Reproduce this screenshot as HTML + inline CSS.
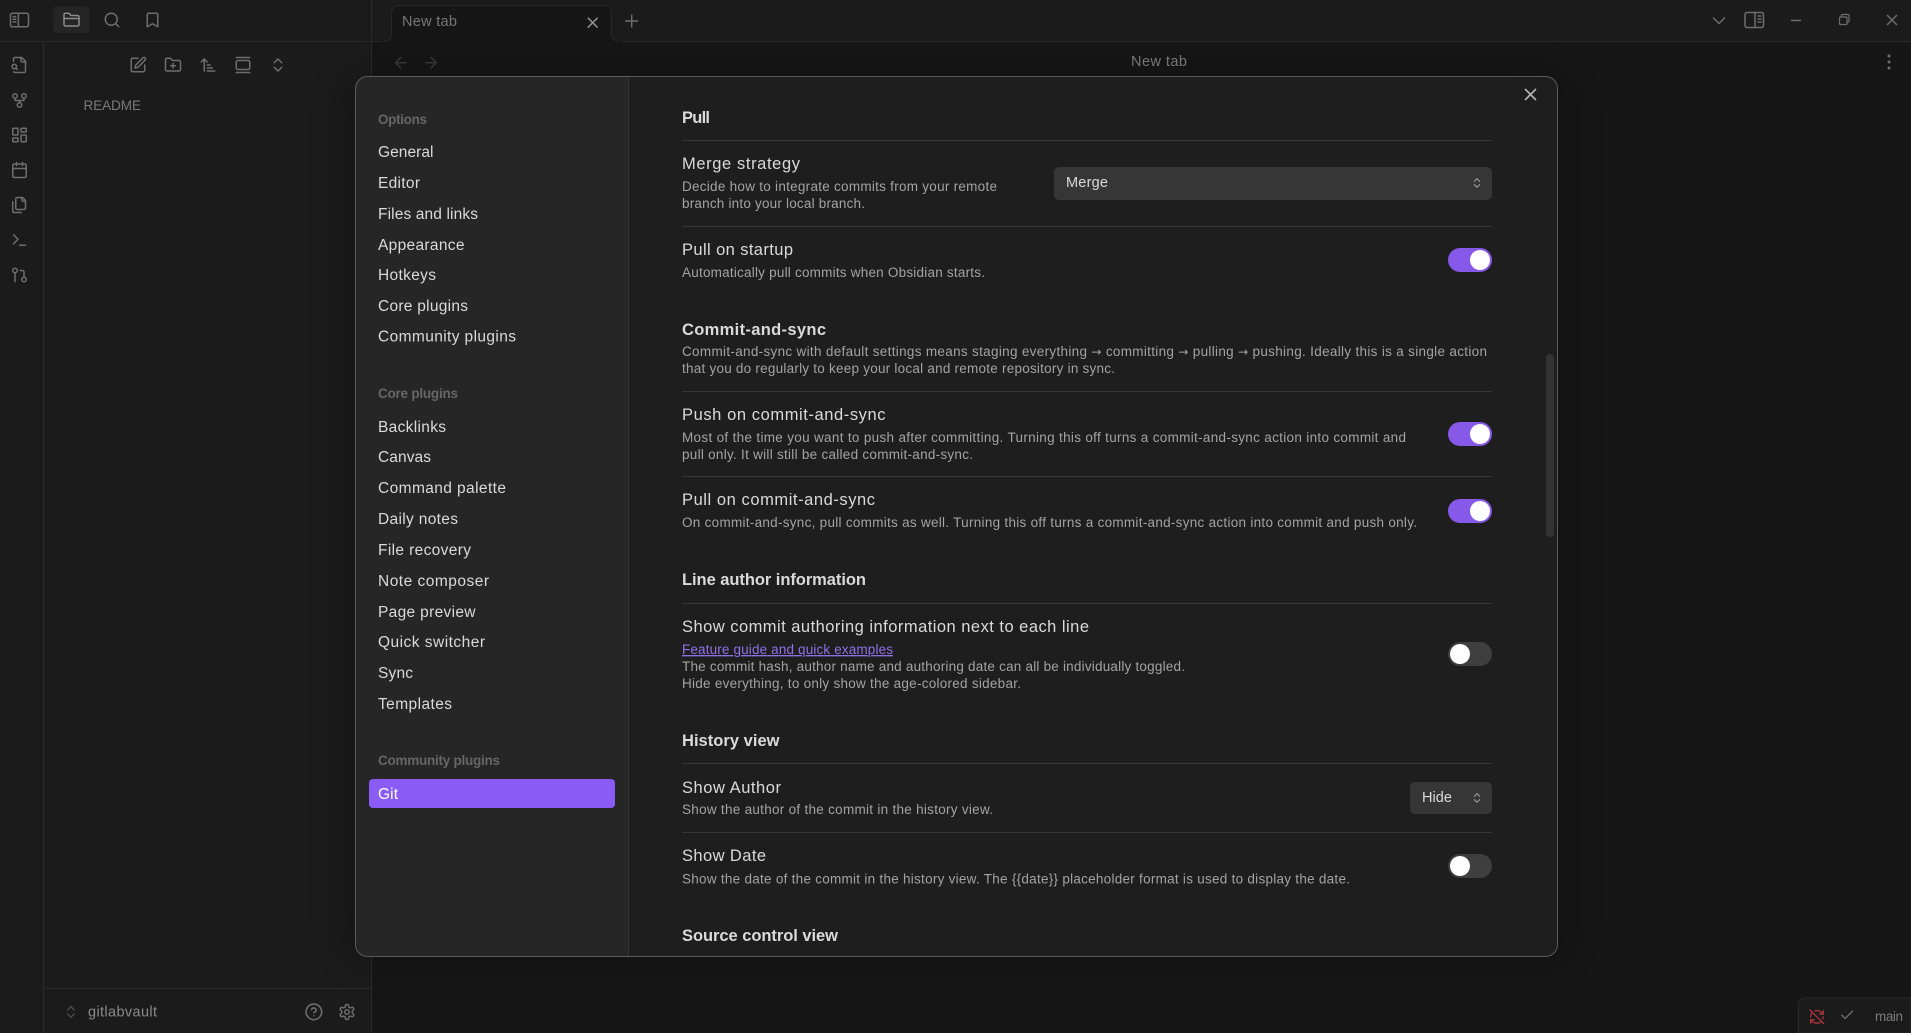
<!DOCTYPE html>
<html><head><meta charset="utf-8"><title>New tab</title>
<style>
html,body{margin:0;padding:0;background:#161616;width:1911px;height:1033px;overflow:hidden}
svg{display:block}
text{font-family:"Liberation Sans",sans-serif;white-space:pre}
.n{font-size:16.5px;fill:#dadada}
.d{font-size:13.5px;fill:#a3a3a3}
.h{font-size:16.5px;font-weight:700;fill:#dadada}
.s{font-size:15.5px;fill:#dadada}
.l{font-size:13.5px;font-weight:700;fill:#666}
.i{fill:none;stroke:#6e6e6e;stroke-width:2;stroke-linecap:round;stroke-linejoin:round}
.ar{font-family:"DejaVu Sans",sans-serif;font-size:12px}
</style></head><body>
<svg width="1911" height="1033" viewBox="0 0 1911 1033" xmlns="http://www.w3.org/2000/svg">
<defs><filter id="sh" x="-10%" y="-10%" width="120%" height="120%"><feGaussianBlur stdDeviation="18"/></filter></defs>
<!-- base -->
<rect width="1911" height="1033" fill="#161616"/>
<rect width="1911" height="41" fill="#1b1b1b"/>
<rect x="0" y="0" width="372" height="1033" fill="#1b1b1b"/>
<path d="M0 41.5H381M622 41.5H1911" stroke="#2a2a2a"/>
<path d="M43.5 41V1033M371.500 0V1033M44 988.500H371" stroke="#2a2a2a"/>
<!-- tab -->
<path d="M383 41.500Q391.500 41.500 391.500 33V13Q391.500 5.500 399.500 5.500H603.500Q611.500 5.500 611.500 13V33Q611.500 41.500 620 41.500V50H383Z" fill="#161616"/>
<path d="M383 41.500Q391.500 41.500 391.500 33V13Q391.500 5.500 399.500 5.500H603.500Q611.500 5.500 611.500 13V33Q611.500 41.500 620 41.500" fill="none" stroke="#282828"/>
<text x="402" y="26" font-size="14.500" fill="#777" textLength="55">New tab</text>
<g class="i" style="stroke:#8f8f8f;stroke-width:2" transform="translate(583.700 13.700) scale(.75)"><path d="M18 6 6 18M6 6l12 12"/></g>
<g class="i" style="stroke-width:1.700" transform="translate(621.500 10.800) scale(.85)"><path d="M5 12h14M12 5v14"/></g>
<!-- top-left icons -->
<rect x="53" y="6" width="36.500" height="27" rx="4" fill="#252525"/>
<g class="i" transform="translate(10.500 11) scale(.75)"><rect x="0" y="3" width="24" height="18" rx="2.500"/><path d="M10.500 3v18M3.500 7.500h3.500M3.500 11h3.500M3.500 14.500h3.500"/></g>
<g class="i" style="stroke:#8c8c8c" transform="translate(62.500 11) scale(.75)"><path d="M20 20a2 2 0 0 0 2-2V8a2 2 0 0 0-2-2h-7.900a2 2 0 0 1-1.690-.9L9.600 3.900A2 2 0 0 0 7.930 3H4a2 2 0 0 0-2 2v13a2 2 0 0 0 2 2Z"/><path d="M2 10h20"/></g>
<g class="i" transform="translate(103 11) scale(.75)"><circle cx="11" cy="11" r="8"/><path d="m21 21-4.300-4.300"/></g>
<g class="i" transform="translate(143.500 11) scale(.75)"><path d="m19 21-7-4-7 4V5a2 2 0 0 1 2-2h10a2 2 0 0 1 2 2v16z"/></g>
<!-- ribbon -->
<g class="i" transform="translate(10.500 56) scale(.75)"><path d="M14 2v4a2 2 0 0 0 2 2h4"/><path d="M4.268 21a2 2 0 0 0 1.727 1H18a2 2 0 0 0 2-2V7l-5-5H6a2 2 0 0 0-2 2v3"/><path d="m9 18-1.500-1.500"/><circle cx="5" cy="14" r="3"/></g>
<g class="i" transform="translate(10.500 91.500) scale(.75)"><circle cx="12" cy="18" r="3"/><circle cx="6" cy="6" r="3"/><circle cx="18" cy="6" r="3"/><path d="M18 9v2c0 .6-.4 1-1 1H7c-.6 0-1-.4-1-1V9"/><path d="M12 12v3"/></g>
<g class="i" transform="translate(10.500 126) scale(.75)"><rect x="3" y="3" width="7" height="9" rx="1"/><rect x="14" y="3" width="7" height="5" rx="1"/><rect x="14" y="12" width="7" height="9" rx="1"/><rect x="3" y="16" width="7" height="5" rx="1"/></g>
<g class="i" transform="translate(10.500 161) scale(.75)"><path d="M8 2v4M16 2v4"/><rect x="3" y="4" width="18" height="18" rx="2"/><path d="M3 10h18"/></g>
<g class="i" transform="translate(10.500 196) scale(.75)"><path d="M20 7h-3a2 2 0 0 1-2-2V2"/><path d="M9 18a2 2 0 0 1-2-2V4a2 2 0 0 1 2-2h7l4 4v10a2 2 0 0 1-2 2Z"/><path d="M3 7.600v12.800A1.600 1.600 0 0 0 4.600 22h9.800"/></g>
<g class="i" transform="translate(10.500 231) scale(.75)"><path d="m4 17 6-6-6-6"/><path d="M12 19h8"/></g>
<g class="i" transform="translate(10.500 266) scale(.75)"><circle cx="18" cy="18" r="3"/><circle cx="6" cy="6" r="3"/><path d="M13 6h3a2 2 0 0 1 2 2v7"/><path d="M6 9v12"/></g>
<!-- file toolbar -->
<g class="i" transform="translate(129 56) scale(.75)"><path d="M12 3H5a2 2 0 0 0-2 2v14a2 2 0 0 0 2 2h14a2 2 0 0 0 2-2v-7"/><path d="M18.375 2.625a1 1 0 0 1 3 3l-9.013 9.014a2 2 0 0 1-.853.505l-2.873.84a.5.5 0 0 1-.62-.62l.84-2.873a2 2 0 0 1 .506-.852z"/></g>
<g class="i" transform="translate(164 56) scale(.75)"><path d="M12 10v6M9 13h6"/><path d="M20 20a2 2 0 0 0 2-2V8a2 2 0 0 0-2-2h-7.900a2 2 0 0 1-1.690-.9L9.600 3.900A2 2 0 0 0 7.930 3H4a2 2 0 0 0-2 2v13a2 2 0 0 0 2 2Z"/></g>
<g class="i" transform="translate(199 56) scale(.75)"><path d="m3 8 4-4 4 4"/><path d="M7 4v16"/><path d="M11 12h4"/><path d="M11 16h7"/><path d="M11 20h10"/></g>
<g class="i" transform="translate(234 56) scale(.75)"><path d="M3 2h18"/><rect x="3" y="6" width="18" height="12" rx="2"/><path d="M3 22h18"/></g>
<g class="i" transform="translate(269 56) scale(.75)"><path d="m7 15 5 5 5-5"/><path d="m7 9 5-5 5 5"/></g>
<text x="83.500" y="110" font-size="13.500" fill="#7a7a7a" textLength="57.500">README</text>
<!-- nav bar -->
<g class="i" style="stroke:#393939;stroke-width:2" transform="translate(391.800 53.700) scale(.75)"><path d="m12 19-7-7 7-7M19 12H5"/></g>
<g class="i" style="stroke:#393939;stroke-width:2" transform="translate(422 53.700) scale(.75)"><path d="M5 12h14M12 5l7 7-7 7"/></g>
<text x="1131" y="66" font-size="14.500" fill="#7e7e7e" textLength="56">New tab</text>
<g fill="#6e6e6e"><circle cx="1889" cy="56" r="1.500"/><circle cx="1889" cy="62" r="1.500"/><circle cx="1889" cy="68" r="1.500"/></g>
<!-- window controls -->
<g class="i" style="stroke-width:1.500"><path d="M1713.500 18l5.500 5.500 5.500-5.500"/></g>
<g fill="none" stroke="#6e6e6e" stroke-width="1.500"><rect x="1745" y="12.500" width="18.500" height="15" rx="2"/><path d="M1755 12.500v15M1757.500 16h4M1757.500 19h4M1757.500 22h4"/></g>
<path d="M1791 20.500h10" stroke="#6e6e6e" stroke-width="1.500"/>
<g fill="none" stroke="#6e6e6e" stroke-width="1.200"><rect x="1839.500" y="17" width="7.500" height="7.500" rx="1"/><path d="M1841.500 17v-1.500q0-1 1-1h5.500q1 0 1 1v5.500q0 1-1 1h-1"/></g>
<path d="M1887 15l10 10M1897 15l-10 10" stroke="#6e6e6e" stroke-width="1.500" fill="none"/>
<!-- vault bar -->
<g class="i" style="stroke:#4d4d4d" transform="translate(63 1004) scale(.66)"><path d="m7 15 5 5 5-5"/><path d="m7 9 5-5 5 5"/></g>
<text x="88" y="1016.500" font-size="14.500" fill="#8a8a8a" textLength="69">gitlabvault</text>
<g class="i" transform="translate(304.500 1002.500) scale(.78)"><circle cx="12" cy="12" r="10"/><path d="M9.090 9a3 3 0 0 1 5.830 1c0 2-3 3-3 3"/><path d="M12 17h.01"/></g>
<g class="i" transform="translate(338 1003) scale(.75)"><path d="M12.220 2h-.44a2 2 0 0 0-2 2v.18a2 2 0 0 1-1 1.730l-.43.25a2 2 0 0 1-2 0l-.15-.08a2 2 0 0 0-2.730.73l-.22.38a2 2 0 0 0 .73 2.730l.15.1a2 2 0 0 1 1 1.720v.51a2 2 0 0 1-1 1.740l-.15.09a2 2 0 0 0-.73 2.730l.22.38a2 2 0 0 0 2.730.73l.15-.08a2 2 0 0 1 2 0l.43.25a2 2 0 0 1 1 1.730V20a2 2 0 0 0 2 2h.44a2 2 0 0 0 2-2v-.18a2 2 0 0 1 1-1.730l.43-.25a2 2 0 0 1 2 0l.15.08a2 2 0 0 0 2.730-.73l.22-.39a2 2 0 0 0-.73-2.730l-.15-.08a2 2 0 0 1-1-1.740v-.5a2 2 0 0 1 1-1.740l.15-.09a2 2 0 0 0 .73-2.730l-.22-.38a2 2 0 0 0-2.730-.73l-.15.08a2 2 0 0 1-2 0l-.43-.25a2 2 0 0 1-1-1.730V4a2 2 0 0 0-2-2z"/><circle cx="12" cy="12" r="3"/></g>
<!-- status bar -->
<path d="M1798.500 1033V1006q0-8 8-8H1911V1033Z" fill="#1b1b1b" stroke="#2a2a2a"/>
<g class="i" style="stroke:#a8323a" transform="translate(1808.500 1008.500) scale(.7)"><path d="M21 8L18.740 5.740A9.750 9.750 0 0 0 12 3C11 3 10.030 3.160 9.130 3.470"/><path d="M8 16H3v5"/><path d="M3 12C3 9.510 4 7.260 5.640 5.640"/><path d="m3 16 2.260 2.260A9.750 9.750 0 0 0 12 21c2.490 0 4.740-1 6.360-2.640"/><path d="M21 12c0 1-.16 1.970-.47 2.870"/><path d="M21 3v5h-5"/><path d="M22 22 2 2"/></g>
<g class="i" transform="translate(1839 1007) scale(.68)"><path d="M20 6 9 17l-5-5"/></g>
<text x="1875" y="1021" font-size="13.500" fill="#7a7a7a" textLength="28">main</text>
<!-- modal -->
<rect x="340" y="70" width="1232" height="895" rx="30" fill="#000" opacity=".16" filter="url(#sh)"/>
<rect x="355.500" y="76.500" width="1202" height="880" rx="12" fill="#1e1e1e"/>
<path d="M628 77H368Q356 77 356 89V944Q356 956 368 956H628Z" fill="#262626"/>
<path d="M628.500 77V956" stroke="#363636"/>
<rect x="355.500" y="76.500" width="1202" height="880" rx="12" fill="none" stroke="#5a5a5a"/>
<!-- settings nav -->
<text class="l" x="378" y="124" textLength="49">Options</text>
<text class="s" x="378" y="157" textLength="55.500">General</text>
<text class="s" x="378" y="188" textLength="42">Editor</text>
<text class="s" x="378" y="219" textLength="100">Files and links</text>
<text class="s" x="378" y="250" textLength="86.500">Appearance</text>
<text class="s" x="378" y="280" textLength="58">Hotkeys</text>
<text class="s" x="378" y="311" textLength="90">Core plugins</text>
<text class="s" x="378" y="341.500" textLength="138">Community plugins</text>
<text class="l" x="378" y="398" textLength="80">Core plugins</text>
<text class="s" x="378" y="432" textLength="68">Backlinks</text>
<text class="s" x="378" y="462" textLength="53">Canvas</text>
<text class="s" x="378" y="493" textLength="128">Command palette</text>
<text class="s" x="378" y="524" textLength="80">Daily notes</text>
<text class="s" x="378" y="555" textLength="93">File recovery</text>
<text class="s" x="378" y="586" textLength="111">Note composer</text>
<text class="s" x="378" y="617" textLength="97.500">Page preview</text>
<text class="s" x="378" y="647" textLength="107">Quick switcher</text>
<text class="s" x="378" y="678" textLength="35">Sync</text>
<text class="s" x="378" y="709" textLength="74">Templates</text>
<text class="l" x="378" y="765" textLength="122">Community plugins</text>
<rect x="369" y="779" width="246" height="29" rx="4" fill="#8a5cf5"/>
<text class="s" x="378" y="799" style="fill:#fff" textLength="20">Git</text>
<!-- close -->
<path d="M1525 89l11 11M1536 89l-11 11" stroke="#b5b5b5" stroke-width="1.600" fill="none"/>
<!-- dividers -->
<path d="M682 140.500H1492M682 226.500H1492M682 391.500H1492M682 476.500H1492M682 603.500H1492M682 763.500H1492M682 832.500H1492" stroke="#363636"/>
<!-- scrollbar -->
<rect x="1546" y="354" width="8" height="183" rx="4" fill="#333"/>
<!-- content -->
<text class="h" x="682" y="123" textLength="28">Pull</text>
<text class="n" x="682" y="169" textLength="118">Merge strategy</text>
<text class="d" x="682" y="191" textLength="315">Decide how to integrate commits from your remote</text>
<text class="d" x="682" y="208" textLength="183">branch into your local branch.</text>
<rect x="1054" y="167" width="438" height="33" rx="5" fill="#363636"/>
<text x="1066" y="187" font-size="14.500" fill="#dadada" textLength="42">Merge</text>
<g class="i" style="stroke:#a0a0a0" transform="translate(1470.500 176.500) scale(.54)"><path d="m7 15 5 5 5-5"/><path d="m7 9 5-5 5 5"/></g>
<text class="n" x="682" y="255" textLength="111">Pull on startup</text>
<text class="d" x="682" y="277" textLength="303">Automatically pull commits when Obsidian starts.</text>
<rect x="1448" y="248" width="44" height="24" rx="12" fill="#8659e8"/><circle cx="1480" cy="260" r="10" fill="#fff"/>
<text class="h" x="682" y="335" textLength="144">Commit-and-sync</text>
<text class="d" x="682" y="356" textLength="805">Commit-and-sync with default settings means staging everything <tspan class="ar">→</tspan> committing <tspan class="ar">→</tspan> pulling <tspan class="ar">→</tspan> pushing. Ideally this is a single action</text>
<text class="d" x="682" y="373" textLength="433">that you do regularly to keep your local and remote repository in sync.</text>
<text class="n" x="682" y="420" textLength="203.500">Push on commit-and-sync</text>
<text class="d" x="682" y="442" textLength="724">Most of the time you want to push after committing. Turning this off turns a commit-and-sync action into commit and</text>
<text class="d" x="682" y="459" textLength="291">pull only. It will still be called commit-and-sync.</text>
<rect x="1448" y="422" width="44" height="24" rx="12" fill="#8659e8"/><circle cx="1480" cy="434" r="10" fill="#fff"/>
<text class="n" x="682" y="505" textLength="193">Pull on commit-and-sync</text>
<text class="d" x="682" y="527" textLength="735">On commit-and-sync, pull commits as well. Turning this off turns a commit-and-sync action into commit and push only.</text>
<rect x="1448" y="499" width="44" height="24" rx="12" fill="#8659e8"/><circle cx="1480" cy="511" r="10" fill="#fff"/>
<text class="h" x="682" y="585" textLength="184">Line author information</text>
<text class="n" x="682" y="632" textLength="407">Show commit authoring information next to each line</text>
<text class="d" x="682" y="654" style="fill:#9170e8;text-decoration:underline" textLength="211">Feature guide and quick examples</text>
<text class="d" x="682" y="671" textLength="503">The commit hash, author name and authoring date can all be individually toggled.</text>
<text class="d" x="682" y="688" textLength="339">Hide everything, to only show the age-colored sidebar.</text>
<rect x="1448" y="642" width="44" height="24" rx="12" fill="#3f3f3f"/><circle cx="1460" cy="654" r="10" fill="#fff"/>
<text class="h" x="682" y="746" textLength="97.500">History view</text>
<text class="n" x="682" y="793" textLength="99">Show Author</text>
<text class="d" x="682" y="814" textLength="311">Show the author of the commit in the history view.</text>
<rect x="1410" y="782" width="82" height="32" rx="5" fill="#363636"/>
<text x="1422" y="802" font-size="14.500" fill="#dadada" textLength="30">Hide</text>
<g class="i" style="stroke:#a0a0a0" transform="translate(1470.500 791.500) scale(.54)"><path d="m7 15 5 5 5-5"/><path d="m7 9 5-5 5 5"/></g>
<text class="n" x="682" y="861" textLength="84">Show Date</text>
<text class="d" x="682" y="883.500" textLength="668">Show the date of the commit in the history view. The {{date}} placeholder format is used to display the date.</text>
<rect x="1448" y="854" width="44" height="24" rx="12" fill="#3f3f3f"/><circle cx="1460" cy="866" r="10" fill="#fff"/>
<text class="h" x="682" y="941" textLength="156">Source control view</text>
</svg>
</body></html>
